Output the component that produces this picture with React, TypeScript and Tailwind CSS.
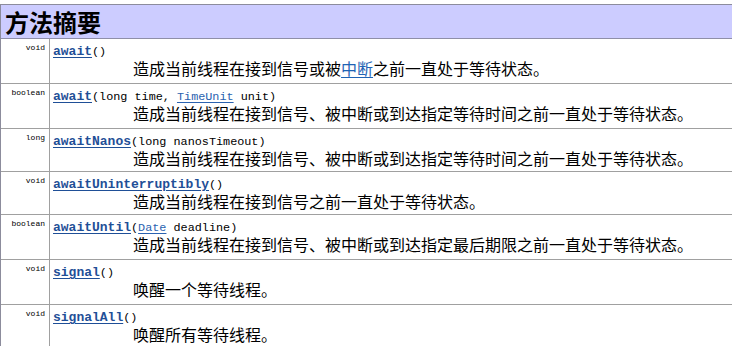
import React from 'react';

interface Method {
  type: string;
  name: string;
  params: React.ReactNode;
  desc: React.ReactNode;
  h: string;
}

const TypeLink = ({ children }: { children: React.ReactNode }) => (
  <span className="text-[#2a62b0] underline underline-offset-2">{children}</span>
);

const methods: Method[] = [
  {
    type: 'void',
    name: 'await',
    params: '()',
    desc: (
      <>
        造成当前线程在接到信号或被<span className="text-[#1f63b4] underline underline-offset-2">中断</span>之前一直处于等待状态。
      </>
    ),
    h: 'h-[45px]',
  },
  {
    type: 'boolean',
    name: 'await',
    params: (
      <>
        (long time, <TypeLink>TimeUnit</TypeLink> unit)
      </>
    ),
    desc: '造成当前线程在接到信号、被中断或到达指定等待时间之前一直处于等待状态。',
    h: 'h-[45px]',
  },
  {
    type: 'long',
    name: 'awaitNanos',
    params: '(long nanosTimeout)',
    desc: '造成当前线程在接到信号、被中断或到达指定等待时间之前一直处于等待状态。',
    h: 'h-[43px]',
  },
  {
    type: 'void',
    name: 'awaitUninterruptibly',
    params: '()',
    desc: '造成当前线程在接到信号之前一直处于等待状态。',
    h: 'h-[43px]',
  },
  {
    type: 'boolean',
    name: 'awaitUntil',
    params: (
      <>
        (<TypeLink>Date</TypeLink> deadline)
      </>
    ),
    desc: '造成当前线程在接到信号、被中断或到达指定最后期限之前一直处于等待状态。',
    h: 'h-[45px]',
  },
  {
    type: 'void',
    name: 'signal',
    params: '()',
    desc: '唤醒一个等待线程。',
    h: 'h-[45px]',
  },
  {
    type: 'void',
    name: 'signalAll',
    params: '()',
    desc: '唤醒所有等待线程。',
    h: 'h-[45px]',
  },
];

export default function App() {
  return (
    <div className="w-[732px] h-[346px] overflow-hidden bg-white pt-[4px]">
      <div className="w-[760px] border-t border-l border-[#8c8c9c]">
        {/* Header */}
        <div className="h-[34px] bg-[#ccccff] border-b border-[#8f8fa8] pl-[4px] flex items-center">
          <h2 className="text-[24px] leading-[28px] font-bold text-black font-['Noto_Sans_CJK_SC',sans-serif]">
            方法摘要
          </h2>
        </div>

        {/* Rows */}
        {methods.map((m, i) => (
          <div key={i} className={`flex border-b border-[#a0a0a0] ${m.h}`}>
            <div className="w-[49px] shrink-0 border-r border-[#a0a0a0] pr-[4px] pt-[4px] text-right text-[8px] leading-[10px] text-black font-['Liberation_Mono',monospace]">
              {m.type}
            </div>
            <div className="flex-1 pl-[3px] pt-[5px]">
              <div className="leading-[14px] whitespace-pre font-['Liberation_Mono',monospace] text-black">
                <span className="text-[13px] font-bold text-[#1f4f97] underline underline-offset-2">
                  {m.name}
                </span>
                <span className="text-[11.8px]">{m.params}</span>
              </div>
              <div className="pl-[80px] text-[16px] leading-[18px] text-black font-['Noto_Sans_CJK_SC',sans-serif]">
                {m.desc}
              </div>
            </div>
          </div>
        ))}
      </div>
    </div>
  );
}
